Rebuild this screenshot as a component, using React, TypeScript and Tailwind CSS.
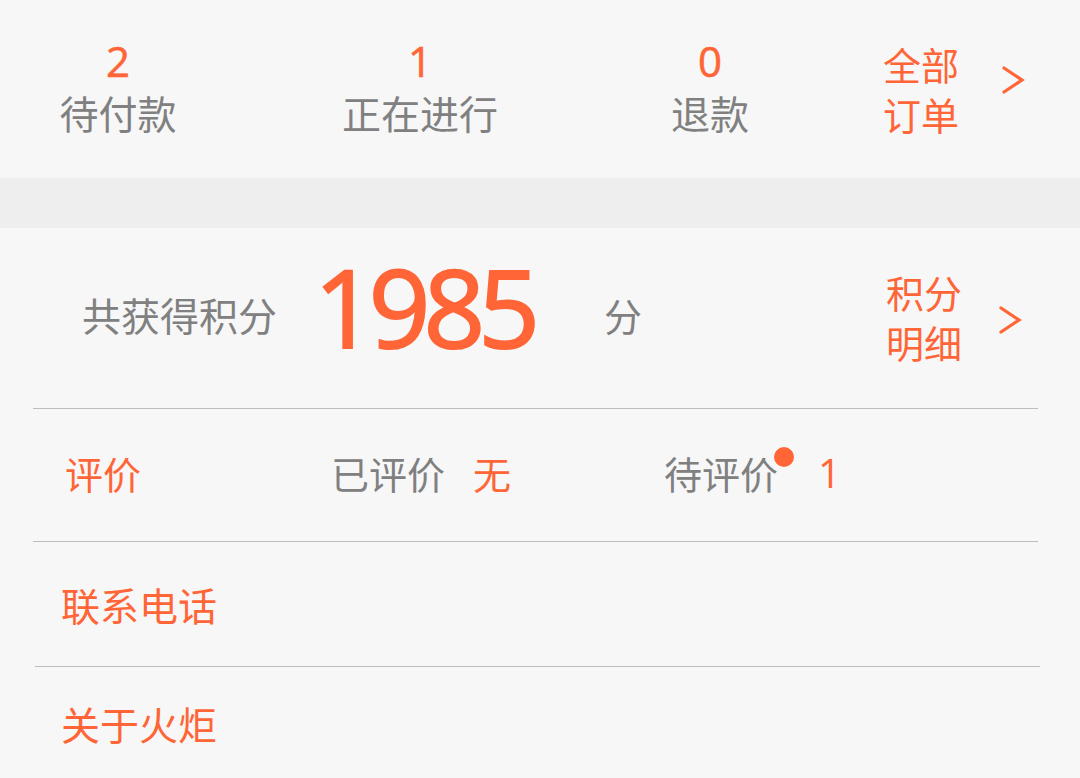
import React from "react";

const CJK = { fontFamily: '"Noto Sans CJK SC", "Noto Sans", sans-serif' };
const NUM = { fontFamily: '"Open Sans", "Noto Sans", sans-serif' };

function Chevron() {
  return (
    <svg width="24" height="28" viewBox="0 0 24 28" className="block">
      <polyline points="3,2 21,14 3,26" fill="none" stroke="#ff6536" strokeWidth="3.2" strokeLinecap="round" strokeLinejoin="miter" />
    </svg>
  );
}

function Stat({ n, label, w }: { n: string; label: string; w: string }) {
  return (
    <div className={`flex flex-col items-center ${w}`}>
      <div className="text-[42px] leading-[44px] text-[#ff6536] [-webkit-text-stroke:0.6px_#ff6536]" style={NUM}>{n}</div>
      <div className="mt-[5px] text-[39px] leading-[48px] text-[#808080]" style={CJK}>{label}</div>
    </div>
  );
}

export default function App() {
  return (
    <div className="w-[1080px] h-[778px] bg-[#f7f7f7] overflow-hidden">
      {/* Orders */}
      <div className="h-[178px] flex items-start pt-[39px]">
        <Stat n="2" label="待付款" w="w-[236px]" />
        <Stat n="1" label="正在进行" w="w-[368px]" />
        <Stat n="0" label="退款" w="w-[212px]" />
        <div className="flex items-center pl-[67px]">
          <div className="w-[78px] text-[38px] leading-[50px] text-[#ff6536]" style={CJK}>
            <div>全部</div>
            <div>订单</div>
          </div>
          <div className="ml-[40px] -mt-[18px]">
            <Chevron />
          </div>
        </div>
      </div>
      <div className="h-[50px] bg-[#eeeeee]" />

      {/* Points */}
      <div className="h-[180px] flex items-center pl-[82px]">
        <div className="w-[232px] -mt-[8px] text-[39px] leading-[48px] text-[#808080]" style={CJK}>共获得积分</div>
        <div className="w-[290px] text-[108px] leading-[110px] tracking-[-7px] text-[#ff6536] [-webkit-text-stroke:2px_#ff6536] -mt-[22px]" style={NUM}>1985</div>
        <div className="w-[282px] -mt-[6px] text-[38px] leading-[48px] text-[#808080]" style={CJK}>分</div>
        <div className="w-[112px] -mt-[3px] text-[38px] leading-[50px] text-[#ff6536]" style={CJK}>
          <div>积分</div>
          <div>明细</div>
        </div>
        <div className="mt-[4px]">
          <Chevron />
        </div>
      </div>

      <div className="mx-[33px] w-[1005px] h-px bg-[#bdbdbd]" />

      {/* Ratings */}
      <div className="h-[132px] flex items-center pl-[65px]">
        <div className="w-[266px] -mt-[4px] text-[38px] leading-[48px] text-[#ff6536]" style={CJK}>评价</div>
        <div className="w-[333px] -mt-[4px] flex items-center text-[38px] leading-[48px]" style={CJK}>
          <span className="text-[#808080]">已评价</span>
          <span className="ml-[28px] text-[#ff6536]">无</span>
        </div>
        <div className="flex items-center -mt-[4px] text-[38px] leading-[48px]" style={CJK}>
          <span className="relative text-[#808080]">
            待评价
            <span className="absolute -right-[16px] -top-[2px] w-[20px] h-[20px] rounded-full bg-[#ff6536]" />
          </span>
          <span className="ml-[40px] text-[40px] text-[#ff6536]" style={NUM}>1</span>
        </div>
      </div>

      <div className="mx-[33px] w-[1005px] h-px bg-[#bdbdbd]" />

      <div className="h-[124px] flex items-center pl-[61px]">
        <div className="text-[39px] leading-[48px] text-[#ff6536]" style={CJK}>联系电话</div>
      </div>

      <div className="ml-[35px] w-[1005px] h-px bg-[#bdbdbd]" />

      <div className="h-[111px] flex items-center pl-[61px]">
        <div className="text-[39px] leading-[48px] text-[#ff6536]" style={CJK}>关于火炬</div>
      </div>
    </div>
  );
}
